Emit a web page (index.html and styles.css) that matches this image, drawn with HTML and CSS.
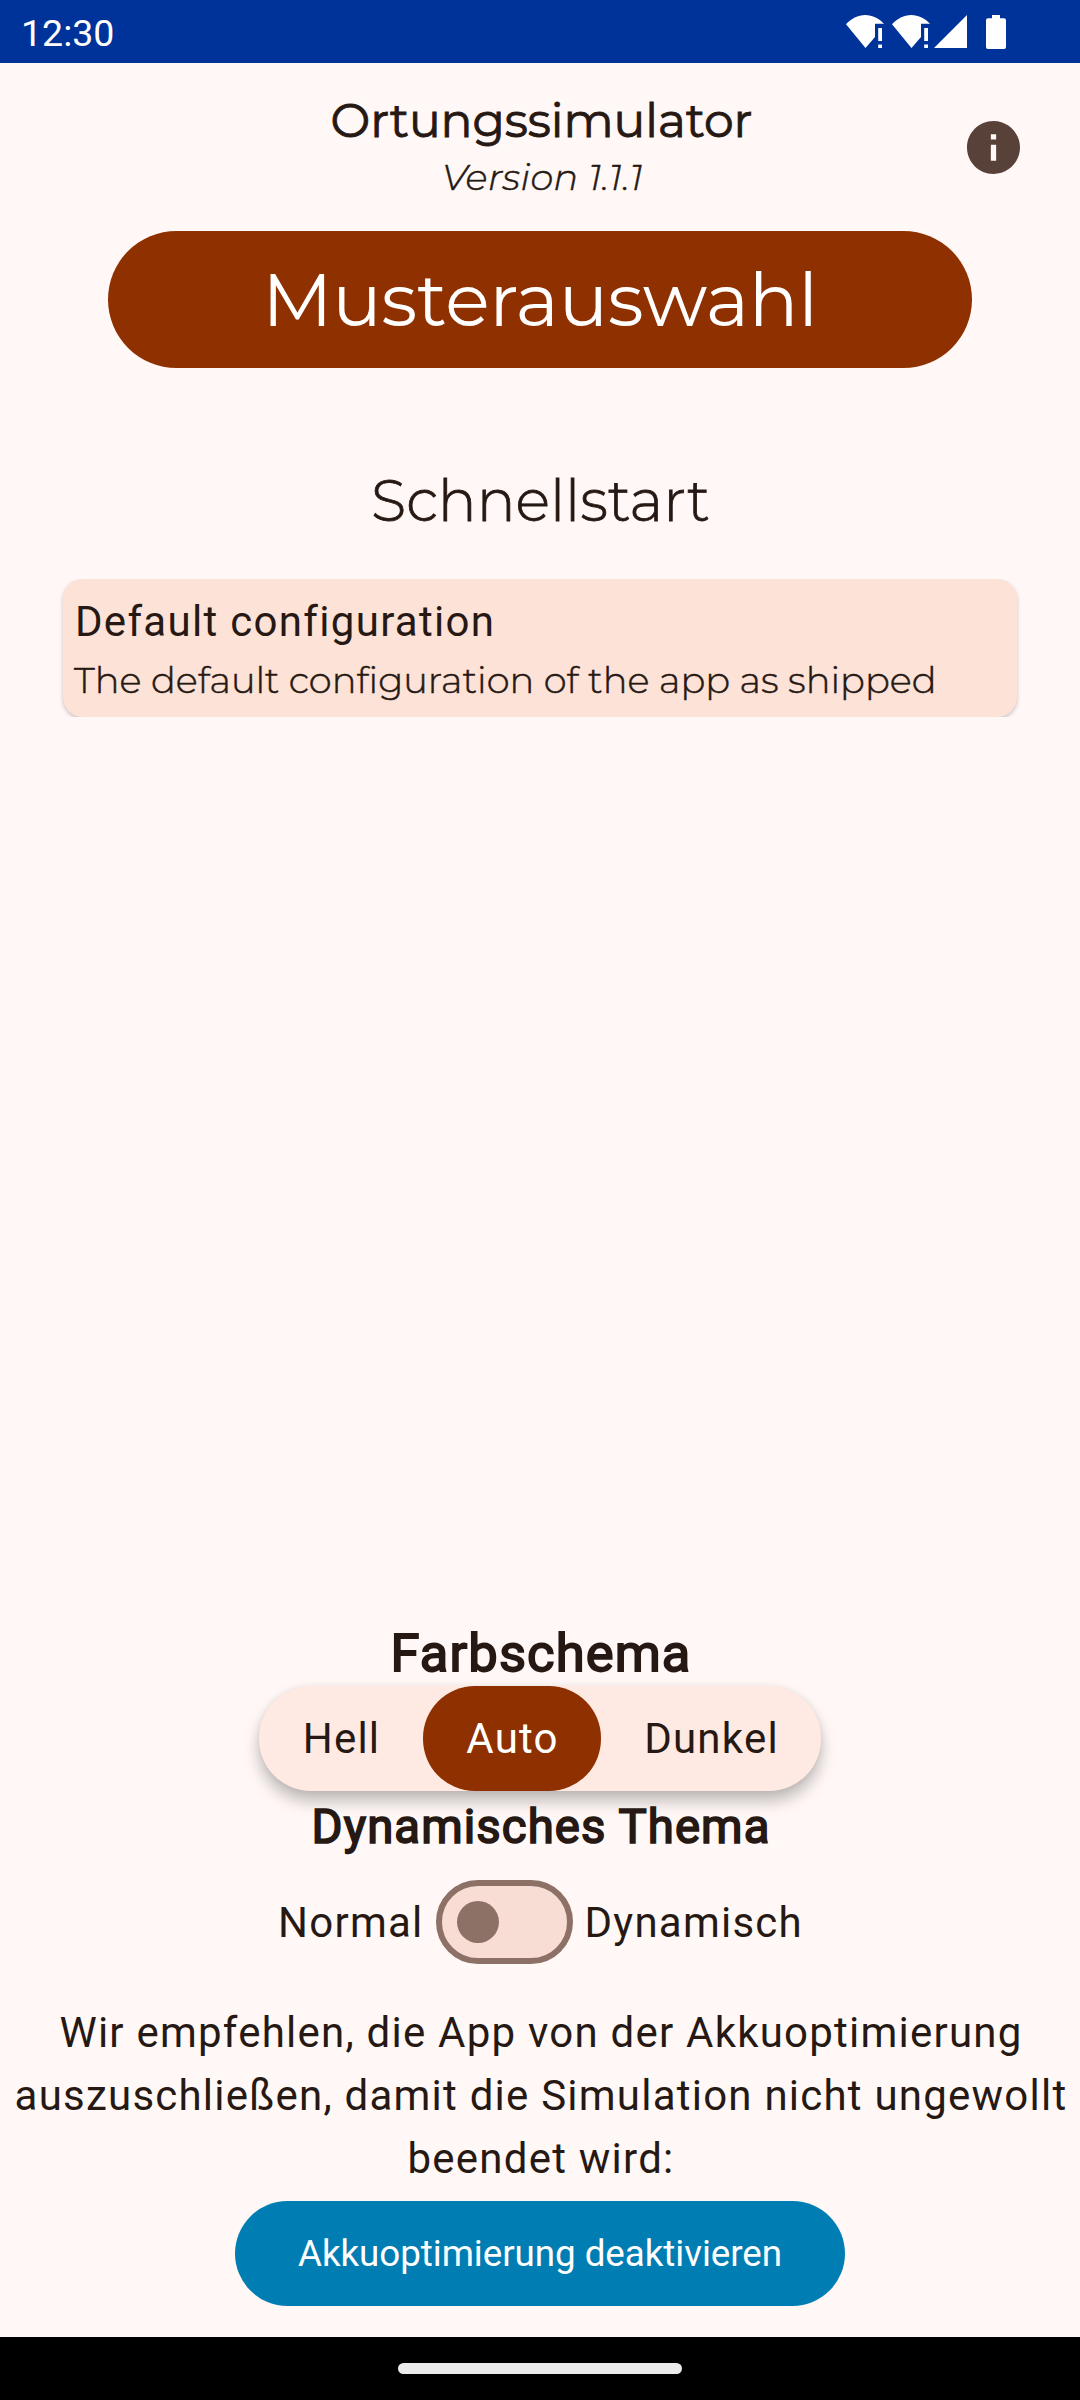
FILE: index.html
```html
<!DOCTYPE html>
<html lang="de">
<head>
<meta charset="utf-8">
<title>Ortungssimulator</title>
<link rel="stylesheet" href="styles.css">
</head>
<body>
<div class="screen">
  <header class="status-bar">
    <span class="clock">12:30</span>
    <div class="status-icons">
      <svg class="wifi" viewBox="0 0 38 33"><path d="M0 9.300C5 3.800 12 0 19.200 0S33.500 3.800 38 8.700H29V22L19.500 33Z"/><path d="M32.200 13h3.800v13h-3.800zM32.200 29.600h3.800V33h-3.800z"/></svg>
      <svg class="wifi" viewBox="0 0 38 33"><path d="M0 9.300C5 3.800 12 0 19.200 0S33.500 3.800 38 8.700H29V22L19.500 33Z"/><path d="M32.200 13h3.800v13h-3.800zM32.200 29.600h3.800V33h-3.800z"/></svg>
      <svg class="signal" viewBox="0 0 33 33"><path d="M33 0V33H0Z"/></svg>
      <svg class="battery" viewBox="0 0 20 34"><path d="M6 0h8v3.300h4a2 2 0 0 1 2 2V32a2 2 0 0 1-2 2H2a2 2 0 0 1-2-2V5.300a2 2 0 0 1 2-2h4z"/></svg>
    </div>
  </header>
  <main class="content">
    <div class="app-head">
      <h1 class="app-title">Ortungssimulator</h1>
      <p class="version">Version 1.1.1</p>
      <svg class="info" viewBox="2 2 20 20"><path d="M12 2C6.480 2 2 6.480 2 12s4.480 10 10 10 10-4.480 10-10S17.520 2 12 2zm1 15h-2v-6h2v6zm0-8h-2V7h2v2z"/></svg>
    </div>
    <button class="pattern-button">Musterauswahl</button>
    <h2 class="quick-title">Schnellstart</h2>
    <div class="quick-list">
      <article class="card">
        <h3 class="card-title">Default configuration</h3>
        <p class="card-text">The default configuration of the app as shipped</p>
      </article>
    </div>
    <section class="settings">
      <h2 class="scheme-title">Farbschema</h2>
      <div class="segments">
        <span class="segment light">Hell</span>
        <span class="segment auto selected">Auto</span>
        <span class="segment dark">Dunkel</span>
      </div>
      <h3 class="theme-title">Dynamisches Thema</h3>
      <div class="switch-row">
        <span>Normal</span>
        <span class="switch"><span class="thumb"></span></span>
        <span>Dynamisch</span>
      </div>
      <p class="hint">Wir empfehlen, die App von der Akkuoptimierung auszuschließen, damit die Simulation nicht ungewollt beendet wird:</p>
      <button class="battery-button">Akkuoptimierung deaktivieren</button>
    </section>
  </main>
  <footer class="nav-bar"><span class="handle"></span></footer>
</div>
</body>
</html>
```
FILE: styles.css
```css
* { box-sizing: border-box; margin: 0; padding: 0; }

body {
  width: 1080px;
  height: 2400px;
  font-family: Roboto, sans-serif;
  font-size: 42px;
  letter-spacing: 1.23px;
  color: #261813;
  background: #fff8f6;
}

h1, h2, h3 { font-weight: 400; }
button { border: 0; font: inherit; letter-spacing: inherit; color: #fff; }

.screen { display: flex; flex-direction: column; height: 2400px; }

.status-bar {
  display: flex;
  align-items: center;
  justify-content: space-between;
  height: 63px;
  padding: 3px 74px 0 21px;
  background: #003399;
  color: #fff;
}
.clock { font-size: 37.5px; letter-spacing: 0; }
.status-icons { display: flex; height: 33px; margin-bottom: 4px; fill: #fff; }
.wifi { width: 38px; height: 33px; margin-right: 8px; }
.signal { width: 33px; height: 33px; margin: 0 19px 0 -4px; }
.battery { width: 20px; height: 34px; }

.content {
  flex: 1;
  display: flex;
  flex-direction: column;
  align-items: center;
  padding: 29px 0 31px;
}

.app-title, .version, .pattern-button, .quick-title, .card-text {
  font-family: Montserrat, Lato, sans-serif;
  letter-spacing: 0;
}

.app-head { position: relative; width: 100%; text-align: center; }
.app-title { padding-left: 3px; font-size: 47.25px; line-height: 56px; letter-spacing: -0.05px; -webkit-text-stroke: 0.9px; }
.version {
  margin-top: 6px;
  padding-left: 5px;
  font-size: 36.75px;
  line-height: 46px;
  font-weight: 300;
  font-style: italic;
  letter-spacing: 0.35px;
  -webkit-text-stroke: 0.5px;
}
.info { position: absolute; left: 967px; top: 29px; width: 53px; height: 53px; fill: #584138; }

.pattern-button {
  width: 864px;
  height: 137px;
  margin-top: 31px;
  border-radius: 69px;
  background: #8f3000;
  font-size: 73.5px;
  font-weight: 400;
  letter-spacing: -0.25px;
}

.quick-title {
  margin-top: 97px;
  padding-left: 1px;
  font-size: 57.75px;
  line-height: 70px;
  font-weight: 300;
  -webkit-text-stroke: 0.8px;
}

.quick-list { width: 100%; margin-top: 44px; padding: 0 63px; overflow: hidden; }
.card {
  height: 138px;
  padding: 15px 12px 0;
  border-radius: 20px;
  background: #fde2d7;
  box-shadow: 0 2px 4px rgba(0, 0, 0, 0.22);
}
.card-title { letter-spacing: 1.31px; font-size: 42px; line-height: 56px; }
.card-text {
  margin: 5px 0 0 -1px;
  font-size: 36.75px;
  line-height: 49px;
  font-weight: 300;
  letter-spacing: 0.03px;
  white-space: nowrap;
  -webkit-text-stroke: 0.5px;
}

.settings { display: flex; flex-direction: column; align-items: center; margin-top: auto; }
.scheme-title { padding-left: 2px; margin-bottom: 1px; font-size: 52.5px; line-height: 64px; letter-spacing: 1.1px; -webkit-text-stroke: 1.8px; }
.segments {
  display: flex;
  height: 105px;
  border-radius: 52px;
  background: #ffe9e3;
  box-shadow: 0 10px 16px rgba(0, 0, 0, 0.26), 0 0 6px rgba(0, 0, 0, 0.06);
}
.segment { padding-left: 1px; line-height: 105px; border-radius: 52px; text-align: center; }
.light { width: 164px; }
.auto { width: 178px; }
.dark { width: 220px; }
.selected { background: #8f3000; color: #fff; }
.theme-title { position: relative; padding-left: 2px; margin-top: 8px; font-size: 47.25px; line-height: 56px; letter-spacing: 1.12px; -webkit-text-stroke: 1.7px; }
.switch-row { display: flex; align-items: center; gap: 12px; height: 84px; margin-top: 25px; padding-left: 1px; }
.switch {
  display: flex;
  align-items: center;
  width: 137px;
  height: 84px;
  padding-left: 15px;
  border: 6px solid #8d7167;
  border-radius: 42px;
  background: #f8ddd4;
}
.thumb { width: 42px; height: 42px; border-radius: 50%; background: #8d7167; }
.hint { width: 1076px; margin-top: 37px; padding-left: 2px; line-height: 63px; text-align: center; }
.battery-button {
  width: 610px;
  height: 105px;
  margin-top: 11px;
  border-radius: 53px;
  background: #007db3;
  font-size: 36.75px;
  letter-spacing: -0.05px;
}

.nav-bar { display: flex; align-items: center; justify-content: center; height: 63px; background: #000; }
.handle { width: 284px; height: 11px; border-radius: 6px; background: #ebebeb; }
```
